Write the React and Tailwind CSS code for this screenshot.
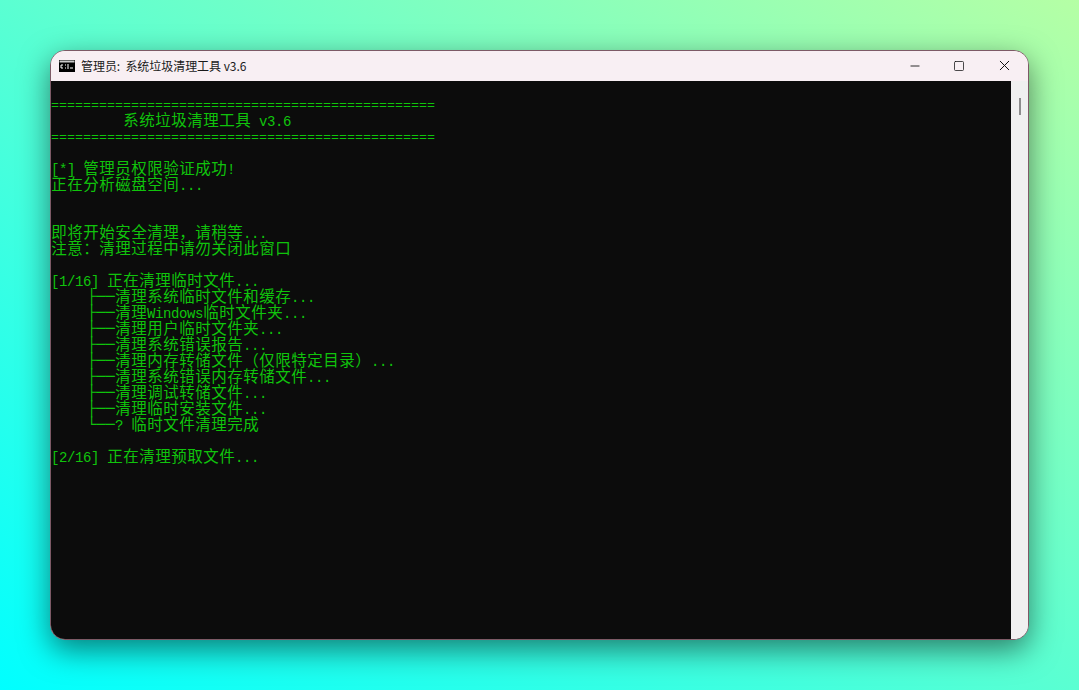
import React from "react";
import { Minus, Square, X } from "lucide-react";

const rule = "=".repeat(48);

const lines = [
  "",
  rule,
  "         系统垃圾清理工具 v3.6",
  rule,
  "",
  "[*] 管理员权限验证成功!",
  "正在分析磁盘空间...",
  "",
  "",
  "即将开始安全清理，请稍等...",
  "注意：清理过程中请勿关闭此窗口",
  "",
  "[1/16] 正在清理临时文件...",
  "    ├──清理系统临时文件和缓存...",
  "    ├──清理Windows临时文件夹...",
  "    ├──清理用户临时文件夹...",
  "    ├──清理系统错误报告...",
  "    ├──清理内存转储文件（仅限特定目录）...",
  "    ├──清理系统错误内存转储文件...",
  "    ├──清理调试转储文件...",
  "    ├──清理临时安装文件...",
  "    └──? 临时文件清理完成",
  "",
  "[2/16] 正在清理预取文件...",
];

// console grid: latin cells are 8px wide, cjk cells are 16px
const Cell = ({ ch }) => {
  if (/[\u3000-\u9fff\uff00-\uffef]/.test(ch)) {
    return <span className="inline-block w-4 translate-y-px text-center text-[15.5px]">{ch}</span>;
  }
  if (ch === "=") {
    return <span className="inline-block w-2 text-[13.33px]">{ch}</span>;
  }
  return <span className="inline-block w-2 translate-y-px text-[14px]">{ch === " " ? "\u00a0" : ch}</span>;
};

const Line = ({ text }) => {
  const tree = text.match(/^ {4}([├└]──)(.*)$/);
  const rest = tree ? tree[2] : text;
  return (
    <div className="h-4 whitespace-nowrap leading-4">
      {tree && <span className="ml-9 inline-block w-7 align-top text-[15.5px]">{tree[1]}</span>}
      {Array.from(rest).map((ch, i) => (
        <Cell key={i} ch={ch} />
      ))}
    </div>
  );
};

const CmdIcon = () => (
  <svg width="16" height="12" viewBox="0 0 16 12" className="shrink-0">
    <rect x="0" y="0" width="16" height="12" fill="#000" />
    <rect x="0.5" y="0.5" width="15" height="2" fill="#c8c8c8" />
    <path d="M2 5h2M2 5v3M2 8h2M6 5h1M6 8h1M9 4v5M11 8h3" stroke="#fff" strokeWidth="1" fill="none" />
  </svg>
);

export default function App() {
  return (
    <div className="flex h-[690px] w-[1079px] overflow-hidden bg-linear-to-tr/srgb from-[#00ffff] to-[#b5ffa5] pt-[50px] pl-[50px]">
      <div className="flex h-[590px] w-[979px] flex-col overflow-hidden rounded-[15px] border border-[#7d5a66] bg-[#f0f0f0] shadow-[0_10px_30px_rgba(0,0,0,0.5)]">
        {/* title bar */}
        <div className="flex h-[30px] shrink-0 items-center bg-[#f8eff3] pb-px pl-2 font-['Noto_Sans_CJK_SC',sans-serif] text-xs text-[#1a1a1a]">
          <CmdIcon />
          <span className="ml-1.5 whitespace-pre tracking-[-0.05px]">管理员:  系统垃圾清理工具 v3.6</span>
          <div className="ml-auto flex items-center text-[#111]">
            <div className="flex w-[45px] justify-center">
              <Minus size={14} strokeWidth={1.5} />
            </div>
            <div className="flex w-[45px] justify-center pr-0.5">
              <Square size={12} strokeWidth={1.5} />
            </div>
            <div className="flex w-[46px] justify-center pr-0.5">
              <X size={17} strokeWidth={1.4} />
            </div>
          </div>
        </div>

        <div className="flex min-h-0 flex-1">
          {/* console */}
          <div className="flex-1 bg-[#0c0c0c] font-['Liberation_Mono','Noto_Sans_CJK_SC',monospace] text-[#10c40c]">
            {lines.map((text, i) => (
              <Line key={i} text={text} />
            ))}
          </div>
          {/* scrollbar */}
          <div className="flex w-[17px] shrink-0 justify-center bg-[#f0f0f0] pt-[17px] pl-px">
            <div className="h-[17px] w-0.5 bg-[#8c8c8c]" />
          </div>
        </div>
      </div>
    </div>
  );
}
